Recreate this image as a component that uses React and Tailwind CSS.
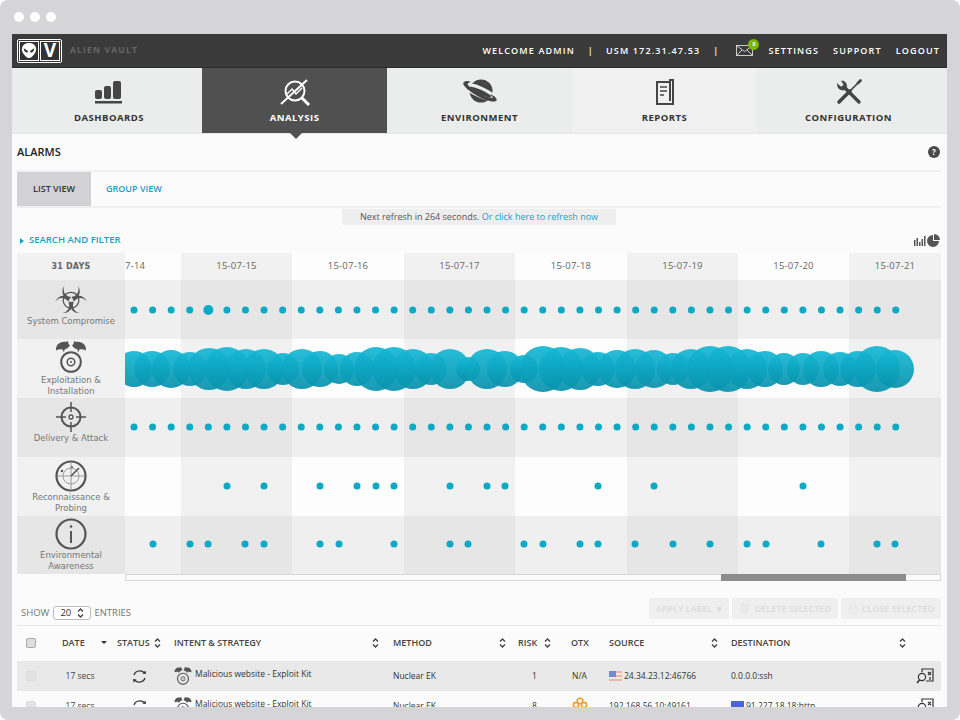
import { GiBiohazard } from "react-icons/gi"
import { Trash2, Lock } from "lucide-react"

const navTabs = [
  { label: "DASHBOARDS", width: "w-[190px] pl-[4px]", icon: <BarsIcon /> },
  { label: "ANALYSIS", width: "w-[185px]", active: true, icon: <AnalysisIcon /> },
  { label: "ENVIRONMENT", width: "w-[185px]", icon: <PlanetIcon /> },
  { label: "REPORTS", width: "w-[185px]", light: true, icon: <ReportIcon /> },
  { label: "CONFIGURATION", width: "w-[190px] pr-[7px]", icon: <ToolsIcon /> },
]

const dateCols = [
  { w: "w-[56px]", label: "7-14", align: "justify-start" },
  { w: "w-[111px]", label: "15-07-15", shade: true },
  { w: "w-[112px]", label: "15-07-16" },
  { w: "w-[111px]", label: "15-07-17", shade: true },
  { w: "w-[112px]", label: "15-07-18" },
  { w: "w-[111px]", label: "15-07-19", shade: true },
  { w: "w-[111px]", label: "15-07-20" },
  { w: "w-[92px]", label: "15-07-21", shade: true },
]

const allDots = Array.from({ length: 42 }, (_, i) => 134 + i * 18.58)

const bubbles = [
  [134, 18], [152, 18], [171, 19], [190, 17], [209, 21], [227, 22], [246, 20], [264, 20], [283, 16], [302, 20],
  [320, 18], [339, 15], [357, 17], [376, 22], [394, 22], [413, 20], [431, 16], [450, 20], [468, 12], [487, 20],
  [505, 18], [524, 14], [543, 23], [561, 22], [580, 21], [598, 17], [617, 19], [635, 20], [654, 19], [673, 16],
  [691, 20], [710, 23], [728, 23], [747, 20], [765, 18], [784, 16], [803, 16], [821, 18], [840, 17], [858, 18],
  [877, 23], [895, 19],
]

const rows = [
  { h: "h-[59px]", dark: true, cy: 30, dots: allDots, big: 4, icon: <GiBiohazard className="w-[34px] h-[34px] text-[#555]" />, pt: "pt-[4px]", label: ["System Compromise"] },
  { h: "h-[59px]", cy: 30, bubbles: true, icon: <ClockIcon className="w-[32px] h-[32px] -translate-y-[2px]" />, pt: "pt-[4px]", label: ["Exploitation &", "Installation"] },
  { h: "h-[59px]", dark: true, cy: 29, dots: allDots, icon: <CrosshairIcon />, pt: "pt-[3px]", label: ["Delivery & Attack"] },
  { h: "h-[59px]", cy: 29, dots: [227, 264, 320, 357, 376, 394, 450, 487, 505, 598, 654, 803], icon: <RadarIcon />, pt: "pt-[3px]", label: ["Reconnaissance &", "Probing"] },
  { h: "h-[58px]", dark: true, cy: 28, dots: [153, 190, 208, 245, 264, 320, 339, 394, 450, 468, 524, 543, 580, 598, 635, 673, 710, 747, 766, 821, 877, 895], icon: <InfoIcon />, pt: "pt-[2px]", label: ["Environmental", "Awareness"] },
]

const tableCols = "grid grid-cols-[45px_55px_57px_219px_125px_53px_38px_122px_210px]"

function BarsIcon() {
  return (
    <svg width="30" height="26" viewBox="0 0 30 26" fill="#454545">
      <rect x="1" y="11" width="7" height="9" rx="2" />
      <rect x="10" y="7" width="7" height="13" rx="2" />
      <rect x="19" y="2" width="8" height="18" rx="2" />
      <rect x="1" y="22" width="27" height="2.5" />
    </svg>
  )
}

function AnalysisIcon() {
  return (
    <svg width="32" height="30" viewBox="0 0 32 30" fill="none" stroke="#fff" strokeWidth="2">
      <circle cx="16" cy="14" r="9.5" />
      <path d="M2 27 L28 3" />
      <path d="M8 17 L13 12 L17 17 L23 11" strokeWidth="1.5" />
      <path d="M23 21 L30 28" strokeWidth="3" />
    </svg>
  )
}

function PlanetIcon() {
  return (
    <svg width="36" height="26" viewBox="0 0 36 26" fill="none">
      <circle cx="19" cy="12" r="11.5" fill="#454545" />
      <ellipse cx="18" cy="13" rx="16" ry="4" transform="rotate(24 18 13)" stroke="#ebecec" strokeWidth="3.2" />
      <path d="M1.5 3.5 C3 1.5 6 1.5 9 3 C6 3.5 5 4.5 6 6 C11 12 22 18 31 19 C30 17 29 16 28 15 C33 17 35.5 20 34.5 21.5 C33 24 23 22 13 15.5 C5 10.5 0 6 1.5 3.5 Z" fill="#454545" />
    </svg>
  )
}

function ReportIcon() {
  return (
    <svg width="20" height="27" viewBox="0 0 20 27" fill="none" stroke="#454545" strokeWidth="2">
      <path d="M15 3 H2 V25 H18 V1 H15 V22" />
      <path d="M5 8 H12 M5 12 H12 M5 16 H9" strokeWidth="1.6" />
    </svg>
  )
}

function ToolsIcon() {
  return (
    <svg width="26" height="26" viewBox="0 0 26 26" fill="none" stroke="#454545" strokeLinecap="round">
      <path d="M8 8 L23 23" strokeWidth="3.4" />
      <path d="M24 2 L14 12" strokeWidth="1.7" />
      <path d="M14 12 L3 23" strokeWidth="3.6" />
      <path d="M24.5 1.5 L22 4" strokeWidth="2.6" />
      <path d="M1.5 5 L5 8 L8 6 L5.5 2 C9 1.5 11.5 5 10.5 9 L8.5 11 C4 11.5 1 9 1.5 5 Z" fill="#454545" strokeWidth="0.6" />
    </svg>
  )
}

function ClockIcon({ className }) {
  return (
    <svg className={className} viewBox="0 0 32 32" fill="none">
      <circle cx="16" cy="21" r="9.8" stroke="#555" strokeWidth="2" />
      <circle cx="16" cy="21" r="3.8" stroke="#555" strokeWidth="1.5" />
      <circle cx="16" cy="21" r="1" fill="#555" />
      <path d="M1 9.5 C0.5 4 5 0 11 1 L13 0 L13.5 3 L15 4.5 C13.5 7 11 8 9.5 8.5 L9 11.5 L7.5 8.5 C5.500 8 3 8.500 1 9.5 Z" fill="#555" />
      <path d="M31 9.5 C31.500 4 27 0 21 1 L19 0 L18.500 3 L17 4.5 C18.500 7 21 8 22.500 8.5 L23 11.5 L24.500 8.5 C26.500 8 29 8.500 31 9.5 Z" fill="#555" />
    </svg>
  )
}

function CrosshairIcon() {
  return (
    <svg width="32" height="32" viewBox="0 0 32 32" fill="none" stroke="#555">
      <circle cx="16" cy="16" r="9.5" strokeWidth="2" />
      <circle cx="16" cy="16" r="2" strokeWidth="1.3" />
      <path d="M16 1 V11 M16 21 V31 M1 16 H11 M21 16 H31" strokeWidth="1.5" />
    </svg>
  )
}

function RadarIcon() {
  return (
    <svg width="32" height="32" viewBox="0 0 32 32" fill="none" stroke="#555">
      <circle cx="16" cy="16" r="14.5" strokeWidth="2.2" />
      <circle cx="16" cy="16" r="8" strokeWidth="0.8" stroke="#888" />
      <path d="M16 3 V29 M3 16 H29" strokeWidth="0.8" stroke="#888" />
      <path d="M16 16 L24 8" strokeWidth="1.6" />
      <circle cx="7" cy="11" r="1.2" fill="#555" stroke="none" />
      <circle cx="17" cy="7" r="0.9" fill="#555" stroke="none" />
    </svg>
  )
}

function InfoIcon() {
  return (
    <svg width="32" height="32" viewBox="0 0 32 32" fill="none" stroke="#555">
      <circle cx="16" cy="16" r="14.5" strokeWidth="2.2" />
      <path d="M16 13 V25" strokeWidth="2" />
      <circle cx="16" cy="8.500" r="1.3" fill="#555" stroke="none" />
    </svg>
  )
}

function AlienLogo() {
  return (
    <svg width="16" height="17" viewBox="0 0 18 19">
      <path d="M9 1 C14 1 17 4 17 8 C17 12 12 18 9 18 C6 18 1 12 1 8 C1 4 4 1 9 1 Z" fill="#fff" />
      <path d="M3 7 L8 10 L7 12 C5 12 3 10 3 7 Z M15 7 L10 10 L11 12 C13 12 15 10 15 7 Z" fill="#333" />
    </svg>
  )
}

function SortIcon() {
  return (
    <svg width="7" height="10" viewBox="0 0 7 10" fill="none" stroke="#444" strokeWidth="1.4" className="shrink-0">
      <path d="M1 3.500 L3.500 1 L6 3.500 M1 6.500 L3.500 9 L6 6.500" />
    </svg>
  )
}

function RefreshIcon() {
  return (
    <svg width="15" height="15" viewBox="0 0 15 15" fill="none" stroke="#333" strokeWidth="1.2">
      <path d="M2 6 C3 2 9 0 12.500 4" />
      <path d="M13 9 C12 13 6 15 2.500 11" />
      <path d="M10.500 4.500 L14 5 L13.500 1.500 Z" fill="#333" stroke="none" />
      <path d="M4.500 10.500 L1 10 L1.500 13.500 Z" fill="#333" stroke="none" />
    </svg>
  )
}

function ViewIcon() {
  return (
    <svg width="18" height="16" viewBox="0 0 18 16" fill="none" stroke="#333" strokeWidth="1.2">
      <path d="M6 4 V1 H17 V13 H10" />
      <circle cx="6" cy="9" r="3.600" />
      <path d="M3.500 12 L1 15" strokeWidth="1.6" />
      <path d="M12 4 L15 7 M15 4 L12 7 M14 9 V12" />
    </svg>
  )
}

function UsFlag() {
  return (
    <svg width="13" height="10" viewBox="0 0 13 10" className="shrink-0">
      <rect width="13" height="10" fill="#e9b9a8" />
      <rect y="2" width="13" height="2" fill="#f3e6e0" />
      <rect y="6" width="13" height="2" fill="#f3e6e0" />
      <rect width="7" height="6" fill="#6d8ed6" />
    </svg>
  )
}

function OtxIcon() {
  return (
    <svg width="16" height="12" viewBox="0 0 16 12" fill="none" stroke="#f59a2c" strokeWidth="1.6" className="-mt-[6px]">
      <circle cx="4" cy="8" r="2.600" />
      <circle cx="8" cy="4" r="2.800" />
      <circle cx="12" cy="8" r="2.600" />
    </svg>
  )
}

function ChartRow({ row }) {
  const tint = row.dark ? "bg-[#efefef]" : "bg-[#fdfdfd]"
  const shade = row.dark ? "bg-[#e6e6e6]" : "bg-[#f1f1f1]"
  return (
    <div className={`relative flex ${row.h}`}>
      <div className={`w-[108px] flex flex-col items-center ${row.pt} ${shade}`}>
        <div className="h-[32px] flex items-center justify-center">{row.icon}</div>
        <div className="text-center text-[8.5px] leading-[10.5px] text-[#777] font-['DejaVu_Sans',sans-serif]">
          {row.label.map(line => <div key={line}>{line}</div>)}
        </div>
      </div>
      {dateCols.map(col => (
        <div key={col.label} className={`${col.w} ${col.shade ? shade : tint}`} />
      ))}
      <svg className="absolute left-[108px] top-0" width="816" height="59">
        <defs>
          <linearGradient id="bubble" x1="0" y1="0" x2="0" y2="1">
            <stop offset="0" stopColor="#14b8d6" />
            <stop offset="1" stopColor="#0791ab" />
          </linearGradient>
        </defs>
        {row.dots && row.dots.map((x, i) => (
          <circle key={i} cx={x - 125} cy={row.cy} r={row.big === i ? 5 : 3.5} fill="#0ba9c5" />
        ))}
        {row.bubbles && bubbles.map(([x, r]) => (
          <circle key={x} cx={x - 125} cy={row.cy} r={r} fill="url(#bubble)" fillOpacity="0.92" />
        ))}
      </svg>
    </div>
  )
}

function TableRow({ bg, risk, otx, flag, source, dest }) {
  return (
    <div className={`${tableCols} h-[30px] items-center text-[8.5px] text-[#333] ${bg}`}>
      <div className="pl-[9px]"><div className="w-[10px] h-[10px] rounded-[2px] bg-[#e3e3e3] border border-[#ddd]" /></div>
      <div className="text-center pr-[19px] text-[#444]">17 secs</div>
      <div className="flex justify-center pr-[12px]"><RefreshIcon /></div>
      <div className="flex items-center gap-[3px] text-[#333]">
        <ClockIcon className="w-[18px] h-[18px]" />
        <span className="-mt-[3px]">Malicious website - Exploit Kit</span>
      </div>
      <div>Nuclear EK</div>
      <div className="text-center pr-[20px]">{risk}</div>
      <div className="flex pl-[1px]">{otx}</div>
      <div className="flex items-center gap-[2px]">{flag}{source}</div>
      <div className="flex items-center justify-between pr-[7px]">
        <span>{dest}</span>
        <ViewIcon />
      </div>
    </div>
  )
}

export default function App() {
  return (
    <div className="w-[960px] h-[720px] bg-white overflow-hidden font-['Open_Sans',sans-serif]">
      <div className="h-full rounded-[8px] bg-[#d5d5d7] px-[12px] pr-[13px]">
        <div className="h-[34px] flex items-start gap-[6px] pt-[12px] pl-[2px]">
          <span className="w-[10px] h-[10px] rounded-full bg-white" />
          <span className="w-[10px] h-[10px] rounded-full bg-white" />
          <span className="w-[10px] h-[10px] rounded-full bg-white" />
        </div>

        <div className="w-[935px] h-[673px] overflow-hidden bg-[#fbfbfb]">
          <header className="h-[34px] bg-[#3a3a3a] border-b border-[#2c2c2c] flex items-center pl-[5px] pr-[7px] text-white">
            <div className="flex items-stretch h-[24px] w-[45px] border border-white rounded-[2px] p-[1px] gap-[1px] bg-[#333]">
              <div className="flex-1 border border-white flex items-center justify-center"><AlienLogo /></div>
              <div className="flex-1 border border-white bg-[#333] flex items-center justify-center text-[19px] font-bold leading-none">V</div>
            </div>
            <div className="ml-[8px] text-[8.5px] font-bold tracking-[1.2px] text-[#666]">ALIEN VAULT</div>
            <div className="ml-auto flex items-center text-[9px] font-semibold tracking-[1.15px]">
              <span>WELCOME ADMIN</span>
              <span className="ml-[13px]">|</span>
              <span className="ml-[12px]">USM 172.31.47.53</span>
              <span className="ml-[13px]">|</span>
              <span className="relative ml-[17px] mr-[15px] flex">
                <svg width="17" height="11" viewBox="0 0 17 11" fill="none" stroke="#ddd" strokeWidth="0.9">
                  <rect x="0.5" y="0.5" width="16" height="10" />
                  <path d="M0.5 0.5 L8.5 6.5 L16.5 0.5 M0.5 10.5 L6 5 M16.5 10.5 L11 5" />
                </svg>
                <span className="absolute -top-[6px] left-[12px] w-[11px] h-[11px] rounded-full bg-[#7ab800] text-[6px] tracking-normal leading-[11px] text-center">8</span>
              </span>
              <span>SETTINGS</span>
              <span className="ml-[14px]">SUPPORT</span>
              <span className="ml-[14px]">LOGOUT</span>
            </div>
          </header>

          <nav className="relative flex h-[66px] border-b border-[#e6e6e6]">
            {navTabs.map(tab => (
              <div
                key={tab.label}
                className={`${tab.width} flex flex-col items-center justify-end pb-[9px] gap-[4px] ${
                  tab.active ? "bg-[#505050] text-white" : tab.light ? "bg-[#f0f0f0] text-[#333]" : "bg-[#ebecec] text-[#333]"
                }`}
              >
                <div className="h-[30px] flex items-center justify-center">{tab.icon}</div>
                <div className="text-[9.5px] font-bold tracking-[0.5px] leading-[13px]">{tab.label}</div>
              </div>
            ))}
            <div className="absolute left-[278px] top-[65px] w-0 h-0 border-x-[6px] border-x-transparent border-t-[6px] border-t-[#505050]" />
          </nav>

          <div className="pl-[5px] pr-[6px]">
            <div className="h-[36px] flex items-center justify-between">
              <h1 className="text-[11px] font-semibold text-[#222]">ALARMS</h1>
              <span className="mr-[1px] w-[12px] h-[12px] rounded-full bg-[#4a4a4a] text-white text-[8px] font-bold leading-[12px] text-center">?</span>
            </div>

            <div className="h-[38px] flex border-y-2 border-[#f0f0f0]">
              <div className="w-[74px] bg-[#d2d2d4] flex items-center justify-center text-[9px] font-semibold text-[#333]">LIST VIEW</div>
              <div className="ml-[15px] flex items-center text-[9px] font-semibold text-[#1a9fc4]">GROUP VIEW</div>
            </div>

            <div className="mt-px mx-auto w-[274px] h-[16px] bg-[#eeeeee] flex items-center justify-center text-[9px] text-[#555]">
              <span>Next refresh in 264 seconds.&nbsp;</span>
              <span className="text-[#1a9fc4]">Or click here to refresh now</span>
            </div>

            <div className="h-[28px] flex items-center justify-between pl-[3px] pt-[3px]">
              <div className="flex items-center gap-[5px] text-[9.5px] font-semibold text-[#1a9fc4]">
                <span className="w-0 h-0 border-y-[3px] border-y-transparent border-l-[4px] border-l-[#1a9fc4]" />
                SEARCH AND FILTER
              </div>
              <svg width="27" height="13" viewBox="0 0 27 13" fill="#555">
                <path d="M0 6 H1.5 V12 H0 Z M2.5 4 H4 V12 H2.5 Z M5 8 H6.5 V12 H5 Z M7.5 5 H9 V12 H7.5 Z M10 2 H11.5 V12 H10 Z" />
                <path d="M19 1 A6 6 0 1 0 25 7 H19 Z" />
                <path d="M20 0 A6 6 0 0 1 26 6 H20 Z" />
              </svg>
            </div>

            <div className="w-[924px]">
              <div className="flex h-[27px] text-[9.5px] tracking-[0.2px] text-[#666]">
                <div className="w-[108px] bg-[#f1f1f1] flex items-center justify-center text-[8px] font-bold font-['DejaVu_Sans',sans-serif] text-[#666]">31 DAYS</div>
                {dateCols.map(col => (
                  <div
                    key={col.label}
                    className={`${col.w} flex items-center ${col.align || "justify-center"} ${col.shade ? "bg-[#f1f1f1]" : "bg-[#fdfdfd]"}`}
                  >
                    {col.label}
                  </div>
                ))}
              </div>
              {rows.map(row => <ChartRow key={row.label[0]} row={row} />)}
              <div className="ml-[108px] h-[7px] border border-[#d8d8d8] bg-[#fafafa] flex">
                <div className="ml-[595px] w-[185px] -my-px bg-[#8c8c8c]" />
              </div>
            </div>

            <div className="mt-[17px] h-[28px] flex items-start justify-between border-b border-[#e8e8e8] text-[9.5px] text-[#777]">
              <div className="flex items-center h-[14px] mt-[8px] pl-[4px]">
                <span>SHOW</span>
                <div className="ml-[4px] w-[38px] h-[14px] flex items-center justify-between px-[6px] rounded-[3px] border border-[#bbb] bg-white text-[#333]">
                  20 <SortIcon />
                </div>
                <span className="ml-[3px]">ENTRIES</span>
              </div>
              <div className="flex gap-[3px] text-[9px] font-semibold text-[#dcdcdc]">
                <div className="w-[80px] h-[21px] rounded-[2px] bg-[#efefef] flex items-center justify-center">APPLY LABEL&nbsp; ▾</div>
                <div className="w-[106px] h-[21px] rounded-[2px] bg-[#efefef] flex items-center justify-between pl-[7px] pr-[7px]">
                  <Trash2 className="w-[11px] h-[11px] text-[#e2e2e2]" />
                  DELETE SELECTED
                </div>
                <div className="w-[100px] h-[21px] rounded-[2px] bg-[#efefef] flex items-center justify-between pl-[7px] pr-[7px]">
                  <Lock className="w-[11px] h-[11px] text-[#e2e2e2]" />
                  CLOSE SELECTED
                </div>
              </div>
            </div>

            <div className={`${tableCols} h-[33px] mb-[2px] items-center text-[9px] font-semibold text-[#444]`}>
              <div className="pl-[9px]"><div className="w-[10px] h-[10px] rounded-[2px] bg-[#ddd] border border-[#aaa]" /></div>
              <div className="flex items-center justify-between pr-[10px]">DATE <span className="w-0 h-0 border-x-[3px] border-x-transparent border-t-[3.5px] border-t-[#333]" /></div>
              <div className="flex items-center justify-between pr-[13px]">STATUS <SortIcon /></div>
              <div className="flex items-center justify-between pr-[14px]">INTENT &amp; STRATEGY <SortIcon /></div>
              <div className="flex items-center justify-between pr-[12px]">METHOD <SortIcon /></div>
              <div className="flex items-center justify-between pr-[20px]">RISK <SortIcon /></div>
              <div>OTX</div>
              <div className="flex items-center justify-between pr-[13px]">SOURCE <SortIcon /></div>
              <div className="flex items-center justify-between pr-[35px]">DESTINATION <SortIcon /></div>
            </div>

            <TableRow bg="bg-[#e9e9e9]" risk="1" otx="N/A" flag={<UsFlag />} source="24.34.23.12:46766" dest="0.0.0.0:ssh" />
            <TableRow
              bg="bg-[#fbfbfb]"
              risk="8"
              otx={<OtxIcon />}
              source="192.168.56.10:49161"
              dest={<span className="flex items-center gap-[2px]"><span className="w-[13px] h-[10px] bg-[#4a63e0]" />91.227.18.18:http</span>}
            />
          </div>
        </div>
      </div>
    </div>
  )
}
